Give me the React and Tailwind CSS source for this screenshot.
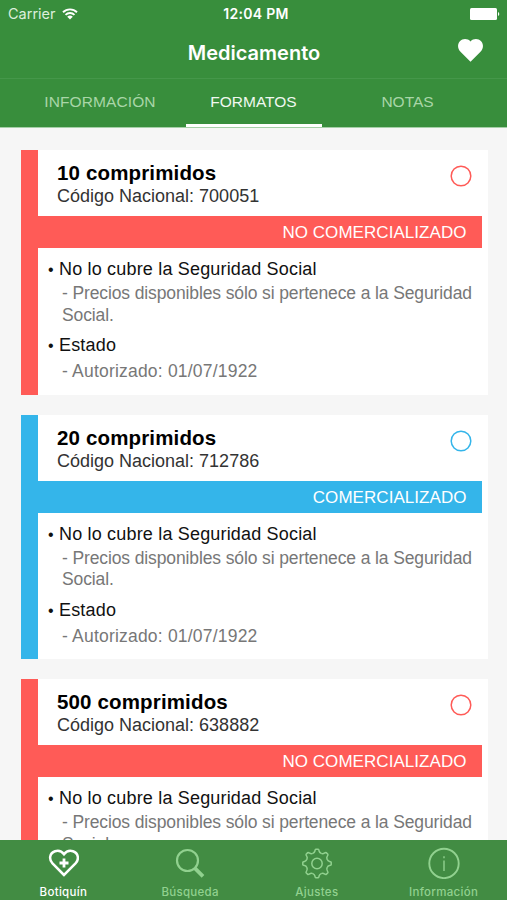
import clsx from 'clsx'

const FORMATS = [
  { name: '10 comprimidos', code: '700051', marketed: false },
  { name: '20 comprimidos', code: '712786', marketed: true },
  { name: '500 comprimidos', code: '638882', marketed: false },
]

function StatusBar() {
  return (
    <div className="grid h-[27px] grid-cols-3 items-center pr-[7px] pl-2 font-['Inter'] text-white">
      <div className="flex items-center gap-[6px]">
        <span className="text-[14.5px] text-[#dcefdb]">Carrier</span>
        <svg width="16" height="12" viewBox="0 0 16 12" fill="none" stroke="currentColor">
          <path d="M1 4.2a10 10 0 0 1 14 0" strokeWidth="1.9" />
          <path d="M3.5 6.9a6.4 6.4 0 0 1 9 0" strokeWidth="1.9" />
          <path d="M8 11.6 5.2 8.8a4 4 0 0 1 5.6 0z" fill="currentColor" stroke="none" />
        </svg>
      </div>
      <span className="pl-1 text-center text-[14px] font-semibold tracking-[0.3px]">12:04 PM</span>
      <svg className="justify-self-end" width="30" height="12" viewBox="0 0 30 12" fill="currentColor">
        <rect width="27" height="12" rx="1.5" />
        <path d="M28 4a2.2 2.2 0 0 1 0 4z" />
      </svg>
    </div>
  )
}

function Header() {
  return (
    <header className="h-32 shrink-0 bg-[#388e3c]">
      <StatusBar />
      <div className="grid h-[52px] grid-cols-[1fr_auto_1fr] items-center border-b border-[#45974a] px-6">
        <h1 className="col-start-2 pl-px font-['Inter'] text-[20px] font-semibold text-white">Medicamento</h1>
        <svg className="-mt-1 justify-self-end" width="25" height="23" viewBox="0 0 25 23" fill="#fff">
          <path d="M12.5 22.7 2.5 12.8C-.6 9.6-.7 5 1.9 2.2 4.8-.7 9.7-.6 12.5 2.5 15.3-.6 20.2-.7 23.1 2.2c2.6 2.8 2.5 7.4-.6 10.6z" />
        </svg>
      </div>
      <nav className="flex h-[49px] justify-between border-b border-[#a5cfa7] px-8 text-[15.5px] leading-[45px]">
        <span className="w-[136px] text-center tracking-[0.1px] text-[#a9d6a8]">INFORMACIÓN</span>
        <span className="w-[136px] border-b-[3px] border-white text-center text-[#f0f8f0]">FORMATOS</span>
        <span className="w-[136px] pl-px text-center text-[#a9d6a8]">NOTAS</span>
      </nav>
    </header>
  )
}

function FormatCard({ format }) {
  const { name, code, marketed } = format
  return (
    <article className={clsx('h-[244.5px] shrink-0 border-l-[17px] bg-white', marketed ? 'border-[#34b5ea]' : 'border-[#ff5b57]')}>
      <div className="flex h-[66px] justify-between pt-[11px] pr-4 pl-[19px]">
        <div>
          <h2 className="text-[20.5px] leading-[23px] font-bold tracking-[0.15px] text-black">{name}</h2>
          <p className="mt-px text-[18px] leading-[23px] text-[#333]">Código Nacional: {code}</p>
        </div>
        <svg
          className={clsx('mt-1', marketed ? 'text-[#34b5ea]' : 'text-[#ff5b57]')}
          width="22"
          height="22"
          fill="none"
          stroke="currentColor"
        >
          <circle cx="11" cy="11" r="9.8" strokeWidth="1.5" />
        </svg>
      </div>
      <div
        className={clsx(
          'mr-[6px] h-8 pr-[15.5px] text-right text-[17px] leading-[33px] tracking-[0.05px] text-white',
          marketed ? 'bg-[#34b5ea]' : 'bg-[#ff5b57]'
        )}
      >
        {marketed ? 'COMERCIALIZADO' : 'NO COMERCIALIZADO'}
      </div>
      <div className="pt-2.5 pl-2.5 text-[17.5px] text-[#777]">
        <p className="flex leading-[23px] text-[#111]">
          <span className="w-[11px] text-[16px]">•</span>
          <span className="text-[18px] tracking-[0.18px]">No lo cubre la Seguridad Social</span>
        </p>
        <p className="mt-0.5 pl-3.5 leading-[21.5px] tracking-[-0.12px] whitespace-nowrap">
          - Precios disponibles sólo si pertenece a la Seguridad
          <br />
          Social.
        </p>
        <p className="mt-2 flex leading-[23px] text-[#111]">
          <span className="w-[11px] text-[16px]">•</span>
          <span className="text-[18px] tracking-[0.18px]">Estado</span>
        </p>
        <p className="mt-0.5 pl-3.5 leading-[25px] tracking-[0.2px]">- Autorizado: 01/07/1922</p>
      </div>
    </article>
  )
}

function HeartPlusIcon() {
  return (
    <svg width="32" height="32" viewBox="0 0 32 32" fill="none" stroke="currentColor">
      <path
        d="M17 28 5.5 16.500C1.700 12.500 2.500 6 8 4.200 11.500 3.200 15 4.500 17 7.200 19 4.500 22.500 3.200 26 4.200 31.500 6 32.300 12.500 28.500 16.500z"
        strokeWidth="2.5"
      />
      <path d="M17 11.500v9M12.500 16h9" strokeWidth="2.800" />
    </svg>
  )
}

function SearchIcon() {
  return (
    <svg width="32" height="32" viewBox="0 0 32 32" fill="none" stroke="currentColor">
      <circle cx="13.5" cy="13.5" r="10.5" strokeWidth="2.2" />
      <path d="m21 21.300 8 8" strokeWidth="3.800" />
    </svg>
  )
}

function GearIcon() {
  return (
    <svg width="32" height="32" viewBox="0 0 32 32" fill="none" stroke="currentColor" strokeWidth="1.5">
      <circle cx="16" cy="16.5" r="5.2" />
      {[0, 45, 90, 135, 180, 225, 270, 315].map((angle) => (
        <path
          key={angle}
          d="M11.8 6.4Q13.6 5.7 13.9 4 14.2 2.3 14.8 2.3H17.2Q17.8 2.3 18.1 4 18.4 5.7 20.2 6.4"
          transform={`rotate(${angle} 16 16.5)`}
        />
      ))}
    </svg>
  )
}

function InfoIcon() {
  return (
    <svg width="32" height="32" viewBox="0 0 32 32" fill="none" stroke="currentColor">
      <circle cx="16" cy="16.400" r="14.700" strokeWidth="1.900" />
      <path d="M16 13.500v10.500M16 9.200v2" strokeWidth="1.400" />
    </svg>
  )
}

const TABS = [
  { label: 'Botiquín', Icon: HeartPlusIcon, active: true },
  { label: 'Búsqueda', Icon: SearchIcon },
  { label: 'Ajustes', Icon: GearIcon },
  { label: 'Información', Icon: InfoIcon },
]

function TabBar() {
  return (
    <footer className="flex h-[60px] shrink-0 bg-[#428c43]">
      {TABS.map(({ label, Icon, active }) => (
        <div
          key={label}
          className={clsx('flex flex-1 flex-col items-center pt-[7px]', active ? 'text-white' : 'text-[#91d18f]')}
        >
          <Icon />
          <span className="mt-[5px] font-['Inter'] text-[11.5px] leading-4 font-medium tracking-[0.3px]">{label}</span>
        </div>
      ))}
    </footer>
  )
}

export default function App() {
  return (
    <div className="flex h-[900px] w-[507px] flex-col overflow-hidden bg-[#f6f6f6] font-['Liberation_Sans',sans-serif]">
      <Header />
      <main className="flex min-h-0 flex-1 flex-col gap-5 overflow-hidden pt-[22px] pr-[19px] pl-[21px]">
        {FORMATS.map((format) => (
          <FormatCard key={format.code} format={format} />
        ))}
      </main>
      <TabBar />
    </div>
  )
}
